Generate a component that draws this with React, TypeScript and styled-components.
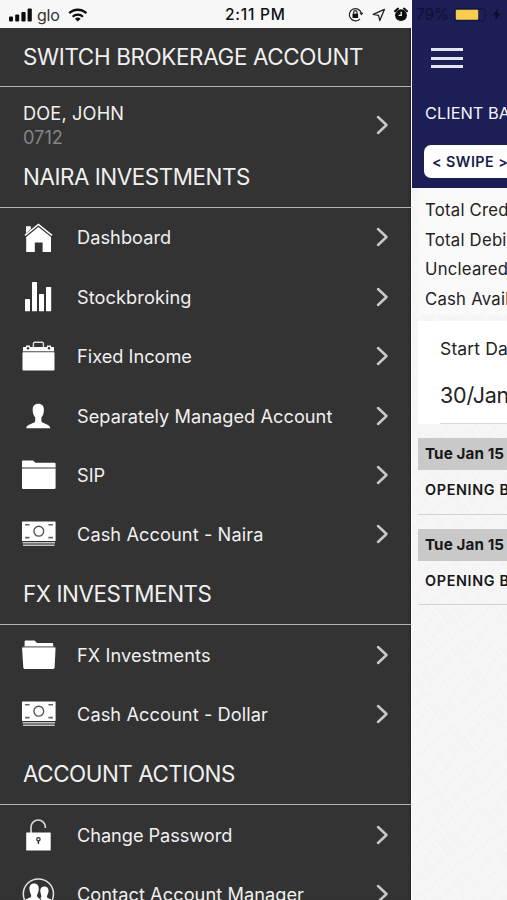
import React from "react";
import styled, { createGlobalStyle } from "styled-components";

const GlobalStyle = createGlobalStyle`
  *, *::before, *::after { box-sizing: border-box; }
  html, body { margin: 0; padding: 0; overflow: hidden; }
  body { font-family: Inter, "Liberation Sans", sans-serif; background: #f6f6f6; }
  svg { display: block; flex: none; }
`;

const Screen = styled.div`
  position: relative;
  width: 507px;
  height: 900px;
  overflow: hidden;
  display: grid;
  grid-template-columns: 411px 96px;
`;

/* ---------- status bar ---------- */

const StatusBar = styled.header`
  position: absolute;
  inset: 0 0 auto 0;
  height: 28px;
  display: grid;
  grid-template-columns: 225px 123px 1fr;
  align-items: center;
  color: #111;
  z-index: 2;
`;

const StatusGroup = styled.div<{ $left?: number }>`
  display: flex;
  align-items: center;
  height: 28px;
  padding-top: 1px;
  padding-left: ${(p) => p.$left ?? 0}px;
`;

const Carrier = styled.span`
  font-size: 16px;
  color: #333;
  margin: 0 8px 0 4px;
  letter-spacing: -0.2px;
`;

const Clock = styled.span`
  font-size: 15.5px;
  font-weight: 500;
  letter-spacing: 0.75px;
  white-space: nowrap;
`;

const Percent = styled.span`
  font-size: 15.5px;
  color: #0f1033;
  margin-left: 8px;
  width: 32px;
  letter-spacing: -0.1px;
  white-space: nowrap;
`;

const StatusIcon = styled.span<{ $gap: number }>`
  margin-left: ${(p) => p.$gap}px;
`;

/* ---------- drawer ---------- */

const Drawer = styled.nav`
  height: 900px;
  overflow: hidden;
  background: #333333;
  border-top: 28px solid #f7f7f7;
  box-shadow: inset -2px 0 2px -1px #222;
  color: #f0f0f0;
  display: flex;
  flex-direction: column;
`;

const SectionTitle = styled.h2<{ $height: number; $spacing: number }>`
  flex: none;
  margin: 0;
  height: ${(p) => p.$height}px;
  padding: 0 0 1px 23px;
  border-bottom: 1.4px solid #b4b4b4;
  display: flex;
  align-items: center;
  font-size: 22.4px;
  font-weight: 400;
  letter-spacing: ${(p) => p.$spacing}px;
  white-space: nowrap;
`;

const AccountRow = styled.div`
  flex: none;
  height: 60.4px;
  padding: 17px 21px 0 23px;
  display: flex;
  align-items: center;
  justify-content: space-between;
`;

const Account = styled.div`
  line-height: 24px;
  font-size: 18.2px;
`;

const AccountName = styled.div`
  letter-spacing: 0.15px;
`;

const AccountNumber = styled.div`
  color: #858585;
  letter-spacing: 0;
`;

const MenuRow = styled.a`
  flex: none;
  height: 59.4px;
  padding: 0 21px 0 20px;
  display: grid;
  grid-template-columns: 57px 1fr 15px;
  align-items: center;
`;

const MenuLabel = styled.span<{ $spacing: number }>`
  font-size: 18.2px;
  letter-spacing: ${(p) => p.$spacing}px;
  white-space: nowrap;
`;

/* ---------- page behind the drawer ---------- */

const Page = styled.main`
  height: 900px;
  overflow: hidden;
  border-left: 1px solid #fff;
  background:
    repeating-linear-gradient(52deg, rgba(255, 255, 255, 0.25) 0 2px, transparent 2px 13px),
    repeating-linear-gradient(-38deg, rgba(0, 0, 0, 0.005) 0 3px, transparent 3px 14px),
    #f5f5f5;
  white-space: nowrap;
  color: #222;
`;

const Hero = styled.div`
  height: 188px;
  margin-left: -1px;
  padding: 48px 0 0 14px;
  background: #1c1e56;
  color: #f4f4fa;
`;

const Burger = styled.div`
  width: 32px;
  height: 20px;
  margin-left: 6px;
  display: flex;
  flex-direction: column;
  justify-content: space-between;
`;

const BurgerBar = styled.span`
  height: 3px;
  background: #e4e4f0;
`;

const HeroTitle = styled.div`
  margin-top: 33px;
  height: 24px;
  line-height: 24px;
  font-size: 16.4px;
  letter-spacing: 0px;
`;

const SwipeButton = styled.div`
  margin-top: 20px;
  margin-left: -1px;
  width: 110px;
  height: 33px;
  line-height: 33px;
  padding-left: 8px;
  border-radius: 7px;
  background: #fff;
  color: #1b1c4c;
  font-size: 14.3px;
  font-weight: 600;
  letter-spacing: 0.45px;
`;

const Summary = styled.div`
  margin-left: 6px;
  height: 127px;
  padding: 8px 0 0 7px;
  background: #f9f9f9;
  font-size: 16.7px;
  line-height: 29.7px;
  letter-spacing: 0.25px;
`;

const DateCard = styled.div`
  margin: 6px 0 0 6px;
  height: 103px;
  padding: 14px 0 0 22px;
  background: #fff;
`;

const DateLabel = styled.div`
  height: 28px;
  line-height: 28px;
  font-size: 17.5px;
  letter-spacing: 0.15px;
`;

const DateValue = styled.div`
  height: 61px;
  line-height: 65px;
  font-size: 21.5px;
  letter-spacing: -0.2px;
  border-bottom: 1px solid #dcdcdc;
`;

const Entry = styled.section`
  margin: 14px 0 0 6px;
  height: 76.5px;
  border-bottom: 1.5px solid #d2d2d2;
  color: #181818;
`;

const EntryDate = styled.div`
  height: 32px;
  line-height: 32px;
  padding-left: 7px;
  background: #c9c9c9;
  font-size: 15.2px;
  font-weight: 700;
  letter-spacing: 0.1px;
`;

const EntryTitle = styled.div`
  height: 38px;
  line-height: 39px;
  padding-left: 7px;
  font-size: 14.4px;
  font-weight: 600;
  letter-spacing: 0.65px;
`;

/* ---------- drawings ---------- */

const ink = "#333333";

const Chevron = () => (
  <svg width="15" height="20" viewBox="0 0 15 20" fill="none">
    <path d="M3 2 L11.5 10 L3 18" stroke="#c9c9c9" strokeWidth="2.5" strokeLinecap="round" strokeLinejoin="round" />
  </svg>
);

const HomeIcon = () => (
  <svg width="37" height="34" viewBox="0 0 37 34" fill="#fff">
    <path d="M6 6.3 H10.8 V9 L6 13.2 Z" />
    <path d="M5 15.4 L18.4 4.4 L32 15.4" fill="none" stroke="#fff" strokeWidth="1.5" />
    <path d="M6.2 17 L18.4 6.9 L31 17 V32 H22.6 V22.4 H14.8 V32 H6.2 Z" />
  </svg>
);

const BarsIcon = () => (
  <svg width="37" height="34" viewBox="0 0 37 34" fill="#fff">
    <rect x="5" y="19" width="5" height="12.3" rx=".6" />
    <rect x="12" y="2" width="5" height="29.3" rx=".6" />
    <rect x="19" y="14" width="5" height="17.3" rx=".6" />
    <rect x="26" y="7" width="5.2" height="24.3" rx=".6" />
  </svg>
);

const BriefcaseIcon = () => (
  <svg width="37" height="34" viewBox="0 0 37 34" fill="#fff">
    <path d="M13.4 8.4 V4.6 Q13.4 3.2 14.8 3.2 H22 Q23.4 3.2 23.4 4.6 V8.4" fill="none" stroke="#ddd" strokeWidth="1.4" />
    <path d="M3 7.9 H6 V6.4 H10 V7.9 H27 V6.4 H31 V7.9 H34 V12 H3 Z" />
    <circle cx="8" cy="9.2" r="1.2" fill={ink} />
    <circle cx="29" cy="9.2" r="1.2" fill={ink} />
    <rect x="2.5" y="12" width="32" height="1.4" fill="#777" />
    <rect x="2.5" y="13.2" width="32" height="18.4" rx=".8" />
  </svg>
);

const PersonIcon = () => (
  <svg width="37" height="34" viewBox="0 0 37 34" fill="#fff">
    <path d="M18.3 4.8 C22 4.8 24 7 23.9 11 C23.8 14.5 22.9 16.7 21.4 18.6 V22 C21.7 25 30 24.4 30.4 29.3 H6.2 C6.6 24.4 14.9 25 15.2 22 V18.6 C13.7 16.7 12.8 14.5 12.7 11 C12.6 7 14.6 4.8 18.3 4.8 Z" />
  </svg>
);

const FolderIcon = () => (
  <svg width="37" height="34" viewBox="0 0 37 34" fill="#fff">
    <path d="M2 9.4 V3.4 Q2 2.4 3 2.4 H12 C14.5 2.4 14 4.7 16.5 4.7 H34.4 Q35.6 4.7 35.6 5.8 V9.4 Z" />
    <path d="M2 11 H35.6 V29.8 Q35.6 31 34.4 31 H3.2 Q2 31 2 29.8 Z" />
    <rect x="2" y="9.2" width="33.6" height="1.8" fill="#9b9b9b" />
  </svg>
);

const OpenFolderIcon = () => (
  <svg width="37" height="34" viewBox="0 0 37 34" fill="#fff">
    <path d="M4.6 8.4 V3.8 Q4.6 2.6 5.8 2.6 H14 C16 2.6 15.4 5 17.6 5 H32 Q33.2 5 33.2 6.2 V8.4 Z" />
    <rect x="3.4" y="8.4" width="30.8" height="1.2" fill="#8a8a8a" />
    <path d="M2 9.6 H35.6 L34.6 29.6 Q34.4 31 33.2 31 H4.6 Q3.5 31 3.3 29.6 Z" />
  </svg>
);

const CashIcon = () => (
  <svg width="37" height="34" viewBox="0 0 37 34" fill="#fff">
    <rect x="2" y="4.5" width="33.6" height="19.6" rx=".6" />
    <circle cx="18.8" cy="14.2" r="4.9" fill="none" stroke="#555" strokeWidth="1.4" />
    <path d="M5 7.8 H9.6 M28.4 7.8 H33 M5 20.6 H9.6 M28.4 20.6 H33" stroke="#666" strokeWidth="1.6" />
    <path d="M2.6 25.7 H35 M3 28.2 H34.6" stroke="#c4c4c4" strokeWidth="1.4" />
  </svg>
);

const LockIcon = () => (
  <svg width="37" height="34" viewBox="0 0 37 34" fill="#fff">
    <path d="M11 15.5 V9.2 A7.2 7.2 0 0 1 25.4 9.2 V10" fill="none" stroke="#d8d8d8" strokeWidth="1.7" />
    <rect x="6.2" y="14.6" width="24.5" height="17.8" rx=".5" />
    <circle cx="18.4" cy="21.3" r="1.7" fill="none" stroke={ink} strokeWidth="1.3" />
    <path d="M18.4 22.8 V26" stroke={ink} strokeWidth="1.4" />
  </svg>
);

const ContactsIcon = () => (
  <svg width="37" height="34" viewBox="0 0 37 34" fill="#fff">
    <circle cx="18.4" cy="17" r="15.1" fill="none" stroke="#e2e2e2" strokeWidth="1.5" />
    <path d="M14 6.6 C18 6.6 19.2 9.6 18.6 13.5 C18.2 16 17 17 17 19 C17.3 21 21 21 21 26 L18 30 L8 27 L5.5 22.6 C8 21 11 21 11.2 19 C11.2 17 10 16 9.6 13.5 C9 9.6 10.2 6.6 14 6.6 Z" />
    <path d="M24.4 9.5 C28 9.5 28.8 12 28.4 15 C28 17 27 18 27 20 C27.3 21.5 30 21.5 31.2 22.6 L27 28 L21.8 30 C22 23 20 22 20.8 20.6 C22 19.5 20.8 18 20.4 15 C20 12 21 9.5 24.4 9.5 Z" />
  </svg>
);

const SignalIcon = () => (
  <svg width="24" height="14" viewBox="0 0 24 14" fill="#0c0c0c">
    <rect x="0" y="8.6" width="4" height="4.9" rx="1" />
    <rect x="6.2" y="6.6" width="4" height="6.9" rx="1" />
    <rect x="12.4" y="4" width="4.2" height="9.5" rx="1" />
    <rect x="18.6" y="0.6" width="4.2" height="12.9" rx="1" />
  </svg>
);

const WifiIcon = () => (
  <svg width="20" height="14" viewBox="0 0 20 14" fill="none" stroke="#0c0c0c">
    <path d="M1.2 5.2 A12.4 12.4 0 0 1 18.4 5.2" strokeWidth="2.3" />
    <path d="M4.6 8.7 A7.6 7.6 0 0 1 15 8.7" strokeWidth="2.1" />
    <path d="M9.8 13.6 L6.9 10.8 A4.2 4.2 0 0 1 12.7 10.8 Z" fill="#0c0c0c" stroke="none" />
  </svg>
);

const RotationLockIcon = () => (
  <svg width="16" height="15" viewBox="0 0 16 15" fill="none" stroke="#222" strokeWidth="1.2">
    <path d="M12 11.8 A6.1 6.1 0 1 1 13.3 6" />
    <path d="M11.4 5.8 H15.4 L13.4 8.6 Z" fill="#222" stroke="none" />
    <rect x="4.5" y="6.6" width="5.6" height="4.4" fill="#111" stroke="none" />
    <path d="M5.6 6.8 V5.4 A1.7 1.7 0 0 1 9 5.4 V6.8" />
  </svg>
);

const LocationIcon = () => (
  <svg width="14" height="14" viewBox="0 0 14 14" fill="none" stroke="#222" strokeWidth="1.3" strokeLinejoin="round">
    <path d="M12.4 1.4 L1.2 6.4 L6.6 7.4 L7.8 12.6 Z" />
  </svg>
);

const AlarmIcon = () => (
  <svg width="14" height="15" viewBox="0 0 14 15">
    <circle cx="7" cy="8.2" r="5.9" fill="#0c0c0c" />
    <path d="M0.9 4.2 L4 1.6 M13.1 4.2 L10 1.6" stroke="#0c0c0c" strokeWidth="2" strokeLinecap="round" />
    <path d="M7.2 4.8 V8.4 H4.6" fill="none" stroke="#f4f4f4" strokeWidth="1.3" />
  </svg>
);

const BatteryIcon = () => (
  <svg width="37" height="14" viewBox="0 0 37 14">
    <rect x="0.7" y="0.7" width="30" height="12.2" rx="2.4" fill="none" stroke="#15163f" strokeWidth="1.2" />
    <rect x="1.8" y="1.8" width="22.4" height="10" rx="1" fill="#f8cd4e" />
    <path d="M32.4 4.8 Q34 6.8 32.4 8.8 Z" fill="#15163f" />
  </svg>
);

const BoltIcon = () => (
  <svg width="9" height="13" viewBox="0 0 9 13" fill="#0c0d28">
    <path d="M5.8 0.4 L0.8 7.2 H4 L3 12.4 L8.2 5.4 H5 Z" />
  </svg>
);

/* ---------- content ---------- */

type Item = { label: string; spacing: number; Icon: React.FC };

const naira: Item[] = [
  { label: "Dashboard", spacing: 0.05, Icon: HomeIcon },
  { label: "Stockbroking", spacing: 0.08, Icon: BarsIcon },
  { label: "Fixed Income", spacing: 0, Icon: BriefcaseIcon },
  { label: "Separately Managed Account", spacing: 0.04, Icon: PersonIcon },
  { label: "SIP", spacing: 0, Icon: FolderIcon },
  { label: "Cash Account - Naira", spacing: 0.09, Icon: CashIcon },
];

const fx: Item[] = [
  { label: "FX Investments", spacing: 0.1, Icon: OpenFolderIcon },
  { label: "Cash Account - Dollar", spacing: 0.09, Icon: CashIcon },
];

const actions: Item[] = [
  { label: "Change Password", spacing: -0.05, Icon: LockIcon },
  { label: "Contact Account Manager", spacing: 0.06, Icon: ContactsIcon },
];

const Menu = ({ items }: { items: Item[] }) => (
  <>
    {items.map(({ label, spacing, Icon }) => (
      <MenuRow key={label}>
        <Icon />
        <MenuLabel $spacing={spacing}>{label}</MenuLabel>
        <Chevron />
      </MenuRow>
    ))}
  </>
);

export default function App() {
  return (
    <>
      <GlobalStyle />
      <Screen>
        <StatusBar>
          <StatusGroup $left={9}>
            <SignalIcon />
            <Carrier>glo</Carrier>
            <WifiIcon />
          </StatusGroup>
          <StatusGroup>
            <Clock>2:11 PM</Clock>
          </StatusGroup>
          <StatusGroup>
            <RotationLockIcon />
            <StatusIcon $gap={8}><LocationIcon /></StatusIcon>
            <StatusIcon $gap={8}><AlarmIcon /></StatusIcon>
            <Percent>79%</Percent>
            <StatusIcon $gap={6}><BatteryIcon /></StatusIcon>
            <StatusIcon $gap={1}><BoltIcon /></StatusIcon>
          </StatusGroup>
        </StatusBar>

        <Drawer>
          <SectionTitle $height={58.5} $spacing={-0.34}>SWITCH BROKERAGE ACCOUNT</SectionTitle>
          <AccountRow>
            <Account>
              <AccountName>DOE, JOHN</AccountName>
              <AccountNumber>0712</AccountNumber>
            </Account>
            <Chevron />
          </AccountRow>
          <SectionTitle $height={60.9} $spacing={-0.45}>NAIRA INVESTMENTS</SectionTitle>
          <Menu items={naira} />
          <SectionTitle $height={61.1} $spacing={-0.45}>FX INVESTMENTS</SectionTitle>
          <Menu items={fx} />
          <SectionTitle $height={61.1} $spacing={-0.45}>ACCOUNT ACTIONS</SectionTitle>
          <Menu items={actions} />
        </Drawer>

        <Page>
          <Hero>
            <Burger>
              <BurgerBar />
              <BurgerBar />
              <BurgerBar />
            </Burger>
            <HeroTitle>CLIENT BALANCE</HeroTitle>
            <SwipeButton>&lt; SWIPE &gt;</SwipeButton>
          </Hero>
          <Summary>
            <div>Total Credit</div>
            <div>Total Debit</div>
            <div>Uncleared</div>
            <div>Cash Available</div>
          </Summary>
          <DateCard>
            <DateLabel>Start Date</DateLabel>
            <DateValue>30/Jan</DateValue>
          </DateCard>
          <Entry>
            <EntryDate>Tue Jan 15</EntryDate>
            <EntryTitle>OPENING BALANCE</EntryTitle>
          </Entry>
          <Entry>
            <EntryDate>Tue Jan 15</EntryDate>
            <EntryTitle>OPENING BALANCE</EntryTitle>
          </Entry>
        </Page>
      </Screen>
    </>
  );
}
